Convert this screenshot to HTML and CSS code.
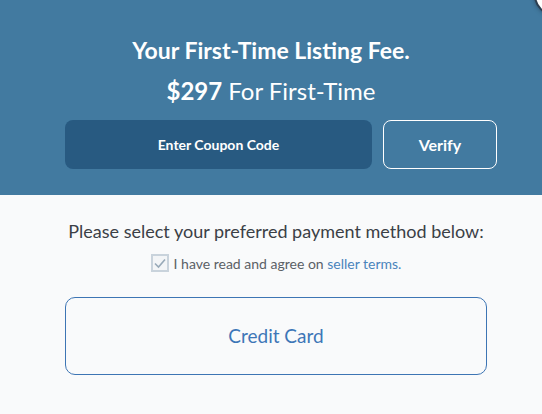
FILE: index.html
```html
<html>
    <head>
        <link rel="stylesheet" href="styles.css">
    </head>
    <body>
        <div class="fee">
            <h1 class="fee-title">Your First-Time Listing Fee.</h1>
            <div class="fee-price"><b>$297</b> For First-Time</div>
            <form class="coupon" onsubmit="return false;">
                <div class="coupon-code">Enter Coupon Code</div>
                <button class="coupon-verify" type="submit">Verify</button>
            </form>
            <span class="close"></span>
        </div>

        <div class="payment">
            <p class="payment-title">Please select your preferred payment method below:</p>
            <label class="terms">
                <span class="terms-box">
                    <svg width="14" height="12" viewBox="0 0 14 12"><path d="M2 6.5 L5.5 10 L12 2.5" fill="none" stroke="#98a9b8" stroke-width="1.6"/></svg>
                </span>
                <span>I have read and agree on <a href="#">seller terms.</a></span>
            </label>
            <a class="method" href="#">Credit Card</a>
        </div>
    </body>
</html>
```

FILE: styles.css
```css
body {
    margin: 0;
    font-family: Lato, "Open Sans", sans-serif;
    background: #f9fafb;
    overflow: hidden;
}
a {
    text-decoration: none;
    color: #4a84bb;
}
.fee {
    position: relative;
    overflow: hidden;
    height: 195px;
    padding: 36px 0 0 0;
    box-sizing: border-box;
    background: #427aa0;
    color: #ffffff;
    text-align: center;
}
.fee-title {
    margin: 0;
    font-size: 23px;
    line-height: 28px;
}
.fee-price {
    margin: 13px 0 0 0;
    font-size: 24px;
    line-height: 28px;
}
.coupon {
    display: flex;
    gap: 11px;
    margin: 15px 0 0 65px;
    width: 432px;
}
.coupon-code {
    flex: 1;
    height: 49px;
    line-height: 49px;
    border-radius: 8px;
    background: #285a81;
    font-size: 14px;
    font-weight: bold;
}
.coupon-verify {
    width: 114px;
    height: 49px;
    border: 1px solid #ffffff;
    border-radius: 8px;
    background: transparent;
    color: #ffffff;
    font-family: inherit;
    font-size: 16px;
    font-weight: bold;
}
.close {
    position: absolute;
    top: -26px;
    right: -34px;
    width: 38px;
    height: 38px;
    border-radius: 50%;
    background: #ffffff;
    border: 2px solid #2c3e50;
    box-shadow: 0 0 4px rgba(30, 50, 70, 0.6);
}
.payment {
    width: 422px;
    margin: 0 0 0 65px;
    padding: 24px 0 0 0;
    text-align: center;
}
.payment-title {
    margin: 0;
    font-size: 18px;
    line-height: 24px;
    color: #3b4046;
    white-space: nowrap;
}
.terms {
    display: flex;
    justify-content: center;
    align-items: center;
    gap: 5px;
    margin: 11px 0 0 0;
    font-size: 14px;
    color: #5b6066;
}
.terms-box {
    display: inline-flex;
    align-items: center;
    justify-content: center;
    width: 14px;
    height: 14px;
    border: 2px solid #c9d3dc;
    background: #f3f5f7;
}
.method {
    display: block;
    margin: 25px 0 0 0;
    height: 76px;
    line-height: 76px;
    border: 1px solid #3d75b4;
    border-radius: 10px;
    font-size: 19px;
    color: #3d76b7;
}
```
